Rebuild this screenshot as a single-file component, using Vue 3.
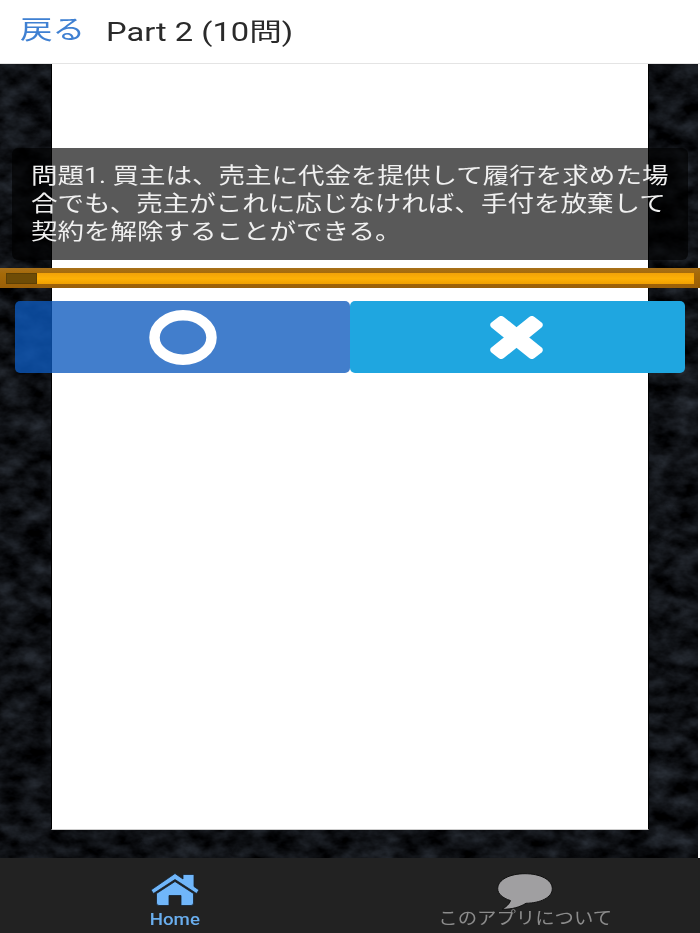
<script setup>
const lines = [
  '問題1. 買主は、売主に代金を提供して履行を求めた場',
  '合でも、売主がこれに応じなければ、手付を放棄して',
  '契約を解除することができる。',
]
</script>

<template>
  <div class="app">
    <header class="header">
      <span class="back">戻る</span>
      <span class="title">Part 2 (10問)</span>
    </header>

    <main class="main">
      <svg class="texture" width="100%" height="100%" aria-hidden="true">
        <filter id="grain" x="0" y="0" width="100%" height="100%" color-interpolation-filters="sRGB">
          <feTurbulence type="fractalNoise" baseFrequency="0.04 0.06" numOctaves="4" seed="7" />
          <feColorMatrix type="matrix" values="0.26 0 0 0 -0.07  0.29 0 0 0 -0.076  0.33 0 0 0 -0.08  0 0 0 0 1" />
        </filter>
        <rect width="100%" height="100%" filter="url(#grain)" />
      </svg>

      <div class="sheet"></div>

      <section class="question">
        <p v-for="line in lines" :key="line" class="line">{{ line }}</p>
      </section>

      <div class="timer">
        <div class="track"><div class="elapsed"></div></div>
      </div>

      <div class="answers">
        <button class="answer yes" type="button" aria-label="正しい">
          <svg class="mark-o" viewBox="0 0 68 55" aria-hidden="true">
            <ellipse cx="34" cy="27.5" rx="28.5" ry="22.2" fill="none" stroke="#fff" stroke-width="10.5" />
          </svg>
        </button>
        <button class="answer no" type="button" aria-label="誤り">
          <svg class="mark-x" viewBox="0 0 100 100" preserveAspectRatio="none" aria-hidden="true">
            <rect x="-8" y="33" width="116" height="34" rx="8" fill="#fff" transform="rotate(45 50 50)" />
            <rect x="-8" y="33" width="116" height="34" rx="8" fill="#fff" transform="rotate(-45 50 50)" />
          </svg>
        </button>
      </div>
    </main>

    <nav class="tabs">
      <div class="tab active">
        <svg class="tab-icon home" viewBox="0 0 50 34" aria-hidden="true">
          <path d="M1 18 L25 1.5 L33 7 L33 2.5 L44 2.5 L44 14.5 L49 18 L46.5 21.5 L25 7.5 L3.5 21.5 Z" fill="#70b6fa" stroke="#14202c" stroke-width="0.8" stroke-linejoin="round" />
          <path d="M6.5 21.5 L25 9.5 L43.5 21.5 L43.5 31 Q43.5 33.5 41 33.5 L31 33.5 L31 23.5 L19 23.5 L19 33.5 L9 33.5 Q6.5 33.5 6.5 31 Z" fill="#70b6fa" stroke="#14202c" stroke-width="0.8" stroke-linejoin="round" />
        </svg>
        <span class="tab-label home-label">Home</span>
      </div>
      <div class="tab">
        <svg class="tab-icon bubble" viewBox="0 0 56 37" aria-hidden="true">
          <path d="M28 0.7 C43 0.7 55.3 6.5 55.3 15.7 C55.3 24.5 43.5 30 29 30.3 C23 34 15 36.5 5 36.3 C9 34 12.5 31 13.5 27.6 C5.5 25 0.7 20.8 0.7 15.7 C0.7 6.5 13 0.7 28 0.7 Z" fill="#a09fa1" stroke="#111" stroke-width="1" />
        </svg>
        <span class="tab-label about-label">このアプリについて</span>
      </div>
    </nav>
  </div>
</template>

<style>
html, body { margin: 0; background: #fff; }
</style>

<style scoped>
.app {
  width: 700px;
  height: 933px;
  display: flex;
  flex-direction: column;
  overflow: hidden;
  font-family: Roboto, "Noto Sans CJK JP", sans-serif;
}
.header {
  height: 63px;
  flex: none;
  box-sizing: content-box;
  border-bottom: 1px solid #e4e4e4;
  background: #fff;
  display: flex;
  align-items: center;
  padding-left: 20px;
}
.back {
  font-size: 26px;
  color: #3f80d2;
  transform: scaleX(1.25);
  transform-origin: left center;
  margin-right: 86px;
  margin-top: -9px;
  white-space: nowrap;
  width: 0;
}
.title {
  font-size: 25px;
  color: #2a2a2a;
  transform: scaleX(1.306);
  transform-origin: left center;
  margin-top: -4px;
  white-space: nowrap;
}
.main {
  position: relative;
  flex: 1;
  display: flex;
  padding: 0 51px 28px;
  background: #fff;
}
.texture {
  position: absolute;
  left: 0;
  top: 0;
  width: 698px;
  height: 100%;
}
.sheet {
  position: relative;
  flex: 1;
  background: #fff;
  border-left: 1px solid #000;
  border-right: 1px solid #000;
  border-bottom: 1px solid #ccc;
}
.question {
  position: absolute;
  left: 12px;
  right: 12px;
  top: 84px;
  height: 112px;
  box-sizing: border-box;
  padding: 14px 19px 0;
  background: rgba(0, 0, 0, 0.65);
  border-radius: 6px;
  color: #f0f0f0;
}
.line {
  margin: 0;
  font-size: 22px;
  line-height: 28px;
  white-space: nowrap;
  transform: scaleX(1.205);
  transform-origin: left center;
}
.timer {
  position: absolute;
  left: 0;
  right: 0;
  top: 204px;
  height: 20px;
  box-sizing: border-box;
  padding: 5px 6px 4px;
  background: linear-gradient(#a8701a, #a56a08 30%, #9a5f08);
}
.track {
  height: 100%;
  background: linear-gradient(#f2a208, #fdb006 50%, #f0a000);
}
.elapsed {
  width: 31px;
  height: 100%;
  background: #6e4c06;
  box-shadow: inset 0 0 0 1px #5d4005;
}
.answers {
  position: absolute;
  left: 15px;
  right: 15px;
  top: 237px;
  height: 72px;
  display: flex;
}
.answer {
  flex: 1;
  border: none;
  padding: 0;
  margin: 0;
  border-radius: 5px;
  display: flex;
  align-items: center;
  justify-content: center;
}
.yes { background: rgba(13, 90, 190, 0.78); }
.no { background: #1fa6e0; }
.mark-o { width: 68px; height: 55px; display: block; }
.mark-x { width: 53px; height: 43px; display: block; margin-right: 2px; }
.tabs {
  height: 75px;
  flex: none;
  background: #222;
  display: flex;
  justify-content: space-between;
}
.tab {
  width: 350px;
  display: flex;
  flex-direction: column;
  align-items: center;
  position: relative;
}
.tab-icon { display: block; margin-top: 14px; }
.home { width: 50px; height: 34px; }
.bubble { width: 56px; height: 37px; margin-top: 15px; }
.tab-label {
  white-space: nowrap;
  line-height: 20px;
}
.home-label {
  color: #6aaeee;
  font-size: 17px;
  font-weight: 500;
  margin-top: 3px;
  transform: scaleX(1.1);
}
.about-label {
  position: absolute;
  top: 50px;
  color: #8c8c8c;
  font-size: 17px;
  transform: scaleX(1.14);
}
</style>
